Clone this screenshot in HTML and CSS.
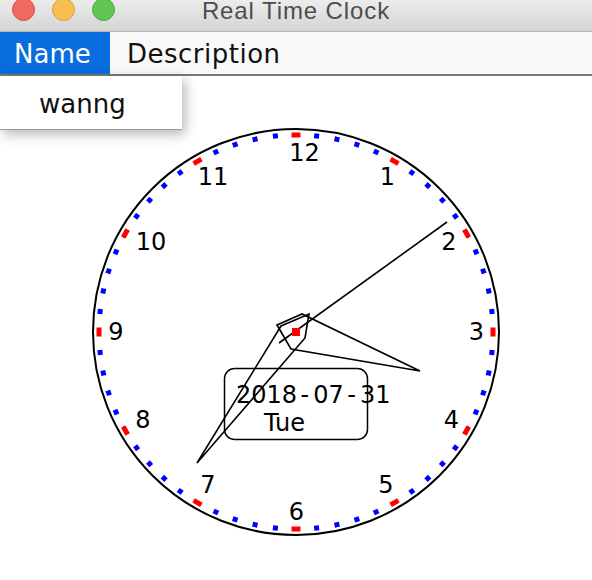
FILE: index.html
```html
<!DOCTYPE html>
<html>
<head>
<meta charset="utf-8">
<title>Real Time Clock</title>
<link rel="stylesheet" href="styles.css">
</head>
<body>
<div class="window">
  <div class="titlebar">
    <div class="lights">
      <span class="light red"></span>
      <span class="light yellow"></span>
      <span class="light green"></span>
    </div>
    <div class="title">Real Time Clock</div>
    <div></div>
  </div>
  <div class="menubar">
    <div class="menu active">Name</div>
    <div class="menu">Description</div>
  </div>
  <div class="content">
    <div class="popup">wanng</div>
    <svg class="clock" width="592" height="504" viewBox="0 76 592 504" xmlns="http://www.w3.org/2000/svg">
      <defs>
        <rect id="hm" x="291.5" y="132.5" width="9" height="5" fill="#ff0000"/>
        <rect id="mm" x="293.5" y="132.5" width="5" height="5" fill="#0000ff"/>
      </defs>
      <circle cx="296" cy="332" r="203" fill="none" stroke="#000" stroke-width="2"/>
      <g class="ticks">
        <use href="#hm" transform="rotate(0 296 332)"/>
        <use href="#hm" transform="rotate(30 296 332)"/>
        <use href="#hm" transform="rotate(60 296 332)"/>
        <use href="#hm" transform="rotate(90 296 332)"/>
        <use href="#hm" transform="rotate(120 296 332)"/>
        <use href="#hm" transform="rotate(150 296 332)"/>
        <use href="#hm" transform="rotate(180 296 332)"/>
        <use href="#hm" transform="rotate(210 296 332)"/>
        <use href="#hm" transform="rotate(240 296 332)"/>
        <use href="#hm" transform="rotate(270 296 332)"/>
        <use href="#hm" transform="rotate(300 296 332)"/>
        <use href="#hm" transform="rotate(330 296 332)"/>
        <use href="#mm" transform="rotate(6 296 332)"/>
        <use href="#mm" transform="rotate(12 296 332)"/>
        <use href="#mm" transform="rotate(18 296 332)"/>
        <use href="#mm" transform="rotate(24 296 332)"/>
        <use href="#mm" transform="rotate(36 296 332)"/>
        <use href="#mm" transform="rotate(42 296 332)"/>
        <use href="#mm" transform="rotate(48 296 332)"/>
        <use href="#mm" transform="rotate(54 296 332)"/>
        <use href="#mm" transform="rotate(66 296 332)"/>
        <use href="#mm" transform="rotate(72 296 332)"/>
        <use href="#mm" transform="rotate(78 296 332)"/>
        <use href="#mm" transform="rotate(84 296 332)"/>
        <use href="#mm" transform="rotate(96 296 332)"/>
        <use href="#mm" transform="rotate(102 296 332)"/>
        <use href="#mm" transform="rotate(108 296 332)"/>
        <use href="#mm" transform="rotate(114 296 332)"/>
        <use href="#mm" transform="rotate(126 296 332)"/>
        <use href="#mm" transform="rotate(132 296 332)"/>
        <use href="#mm" transform="rotate(138 296 332)"/>
        <use href="#mm" transform="rotate(144 296 332)"/>
        <use href="#mm" transform="rotate(156 296 332)"/>
        <use href="#mm" transform="rotate(162 296 332)"/>
        <use href="#mm" transform="rotate(168 296 332)"/>
        <use href="#mm" transform="rotate(174 296 332)"/>
        <use href="#mm" transform="rotate(186 296 332)"/>
        <use href="#mm" transform="rotate(192 296 332)"/>
        <use href="#mm" transform="rotate(198 296 332)"/>
        <use href="#mm" transform="rotate(204 296 332)"/>
        <use href="#mm" transform="rotate(216 296 332)"/>
        <use href="#mm" transform="rotate(222 296 332)"/>
        <use href="#mm" transform="rotate(228 296 332)"/>
        <use href="#mm" transform="rotate(234 296 332)"/>
        <use href="#mm" transform="rotate(246 296 332)"/>
        <use href="#mm" transform="rotate(252 296 332)"/>
        <use href="#mm" transform="rotate(258 296 332)"/>
        <use href="#mm" transform="rotate(264 296 332)"/>
        <use href="#mm" transform="rotate(276 296 332)"/>
        <use href="#mm" transform="rotate(282 296 332)"/>
        <use href="#mm" transform="rotate(288 296 332)"/>
        <use href="#mm" transform="rotate(294 296 332)"/>
        <use href="#mm" transform="rotate(306 296 332)"/>
        <use href="#mm" transform="rotate(312 296 332)"/>
        <use href="#mm" transform="rotate(318 296 332)"/>
        <use href="#mm" transform="rotate(324 296 332)"/>
        <use href="#mm" transform="rotate(336 296 332)"/>
        <use href="#mm" transform="rotate(342 296 332)"/>
        <use href="#mm" transform="rotate(348 296 332)"/>
        <use href="#mm" transform="rotate(354 296 332)"/>
      </g>
      <g class="nums">
        <text x="304.5" y="161">12</text>
        <text x="387.5" y="185">1</text>
        <text x="449" y="250">2</text>
        <text x="476.5" y="340">3</text>
        <text x="451.5" y="428">4</text>
        <text x="386" y="493">5</text>
        <text x="296.5" y="520">6</text>
        <text x="208" y="493">7</text>
        <text x="143" y="428">8</text>
        <text x="116" y="340">9</text>
        <text x="151" y="250">10</text>
        <text x="213" y="185">11</text>
      </g>
      <rect class="datebox" x="224.5" y="368.5" width="143" height="71" rx="10" ry="10"/>
      <text class="date" x="236" y="403">2018<tspan dx="3.5">-</tspan><tspan dx="4">07</tspan><tspan dx="3.5">-</tspan><tspan dx="4">31</tspan></text>
      <text class="date" x="264" y="431">Tue</text>
      <g class="hands">
        <polygon points="277,325 302,314 420,371 291,349"/>
        <polygon points="309,314 305,338 197,463 281,326"/>
        <line x1="279" y1="343" x2="447" y2="222"/>
      </g>
      <rect x="292" y="328" width="8" height="8" fill="#ff0000"/>
    </svg>
  </div>
</div>
</body>
</html>
```
FILE: styles.css
```css
html, body {
  margin: 0;
  padding: 0;
  background: #ffffff;
}

body {
  font-family: "DejaVu Sans", sans-serif;
}

.window {
  width: 592px;
  height: 580px;
  overflow: hidden;
  display: flex;
  flex-direction: column;
  background: #ffffff;
}

.titlebar {
  height: 31px;
  flex: 0 0 auto;
  border-bottom: 1px solid #b4b4b4;
  background: linear-gradient(#ececec, #d4d4d4);
  display: grid;
  grid-template-columns: 1fr auto 1fr;
  align-items: start;
  overflow: hidden;
}

.lights {
  display: flex;
  gap: 17px;
  padding-left: 12px;
  margin-top: -2px;
}

.light {
  width: 23px;
  height: 23px;
  border-radius: 50%;
  box-sizing: border-box;
}

.light.red {
  background: #ee6a5e;
  border: 1px solid #d5524a;
}

.light.yellow {
  background: #f6bf4f;
  border: 1px solid #d9a23b;
}

.light.green {
  background: #62c655;
  border: 1px solid #4eaa3f;
}

.title {
  font-family: "Liberation Sans", Arial, sans-serif;
  font-size: 24px;
  line-height: 22px;
  letter-spacing: 0.9px;
  color: #4d4d4d;
}

.menubar {
  height: 42px;
  flex: 0 0 auto;
  display: flex;
  background: #f9f9f9;
  border-bottom: 2px solid #7a7a7a;
}

.menu {
  font-size: 26px;
  line-height: 42px;
  letter-spacing: 0.5px;
  padding: 1px 16px 0 17px;
  color: #111111;
}

.menu.active {
  width: 110px;
  box-sizing: border-box;
  padding-left: 14px;
  letter-spacing: 0;
  background: #0a6ddd;
  color: #ffffff;
}

.content {
  flex: 1 1 auto;
  position: relative;
}

.popup {
  position: absolute;
  left: 0;
  top: 0;
  width: 182px;
  height: 54px;
  box-sizing: border-box;
  padding: 3px 0 0 39px;
  font-size: 26px;
  line-height: 51px;
  color: #111111;
  background: #ffffff;
  border-bottom: 1px solid #9a9a9a;
  box-shadow: 3px 4px 12px rgba(0, 0, 0, 0.3);
  z-index: 2;
}

.clock {
  display: block;
}

.nums text {
  font-family: "DejaVu Sans", sans-serif;
  font-size: 24px;
  text-anchor: middle;
  fill: #000000;
}

.datebox {
  fill: none;
  stroke: #000000;
  stroke-width: 1.5;
}

.date {
  font-family: "DejaVu Sans", sans-serif;
  font-size: 24px;
  fill: #000000;
}

.hands polygon,
.hands line {
  fill: none;
  stroke: #000000;
  stroke-width: 1.6;
  stroke-linejoin: miter;
}
```
